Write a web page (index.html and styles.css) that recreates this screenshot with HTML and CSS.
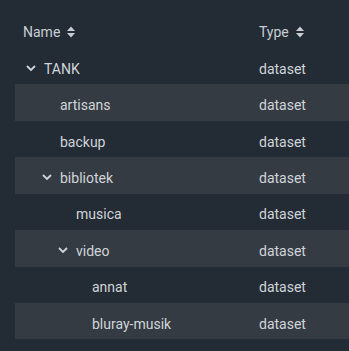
FILE: index.html
```html
<!DOCTYPE html>
<html>
<head>
<meta charset="utf-8">
<link rel="stylesheet" href="styles.css">
</head>
<body>
<div class="tree">
  <div class="row head">
    <div class="cell name">Name <svg class="sort" width="8" height="12" viewBox="0 0 8 12"><path d="M4 0.5 L8 5 L0 5 Z M4 11.5 L8 7 L0 7 Z" fill="currentColor"/></svg></div>
    <div class="cell type">Type <svg class="sort" width="8" height="12" viewBox="0 0 8 12"><path d="M4 0.5 L8 5 L0 5 Z M4 11.5 L8 7 L0 7 Z" fill="currentColor"/></svg></div>
  </div>
  <div class="row">
    <div class="cell name l0"><svg class="chev" width="10" height="7" viewBox="0 0 10 7"><path d="M1 1 L5 5 L9 1" fill="none" stroke="currentColor" stroke-width="1.8"/></svg>TANK</div>
    <div class="cell type">dataset</div>
  </div>
  <div class="row alt">
    <div class="cell name l1 leaf">artisans</div>
    <div class="cell type">dataset</div>
  </div>
  <div class="row">
    <div class="cell name l1 leaf">backup</div>
    <div class="cell type">dataset</div>
  </div>
  <div class="row alt">
    <div class="cell name l1"><svg class="chev" width="10" height="7" viewBox="0 0 10 7"><path d="M1 1 L5 5 L9 1" fill="none" stroke="currentColor" stroke-width="1.8"/></svg>bibliotek</div>
    <div class="cell type">dataset</div>
  </div>
  <div class="row">
    <div class="cell name l2 leaf">musica</div>
    <div class="cell type">dataset</div>
  </div>
  <div class="row alt">
    <div class="cell name l2"><svg class="chev" width="10" height="7" viewBox="0 0 10 7"><path d="M1 1 L5 5 L9 1" fill="none" stroke="currentColor" stroke-width="1.8"/></svg>video</div>
    <div class="cell type">dataset</div>
  </div>
  <div class="row">
    <div class="cell name l3 leaf">annat</div>
    <div class="cell type">dataset</div>
  </div>
  <div class="row alt">
    <div class="cell name l3 leaf">bluray-musik</div>
    <div class="cell type">dataset</div>
  </div>
</div>
</body>
</html>
```
FILE: styles.css
```css
html, body {
  margin: 0;
  padding: 0;
  background: #232b34;
  height: 100%;
}
body {
  font-family: Roboto, "Liberation Sans", sans-serif;
  font-size: 14px;
  color: #d0d4d9;
  overflow: hidden;
}
.tree {
  padding-top: 11.6px;
  padding-left: 15px;
}
.row {
  display: flex;
  height: 36.43px;
  box-sizing: border-box;
  padding-top: 5px;
  align-items: center;
}
.row.alt {
  background: #353b42;
}
.cell {
  display: flex;
  align-items: center;
  white-space: nowrap;
}
.name {
  width: 236px;
  flex: none;
  padding-left: 8px;
  box-sizing: border-box;
}
.type {
  padding-left: 8px;
}
.head .cell {
  color: #c9ced4;
}
.sort {
  margin-left: 7px;
  color: #c9ced4;
}
.chev {
  margin-right: 8px;
  color: #d0d4d9;
}
.l0 { padding-left: 11px; }
.l1 { padding-left: 27px; }
.l2 { padding-left: 43px; }
.l3 { padding-left: 59px; }
.l1.leaf { padding-left: 45px; }
.l2.leaf { padding-left: 61px; }
.l3.leaf { padding-left: 77px; }
```
